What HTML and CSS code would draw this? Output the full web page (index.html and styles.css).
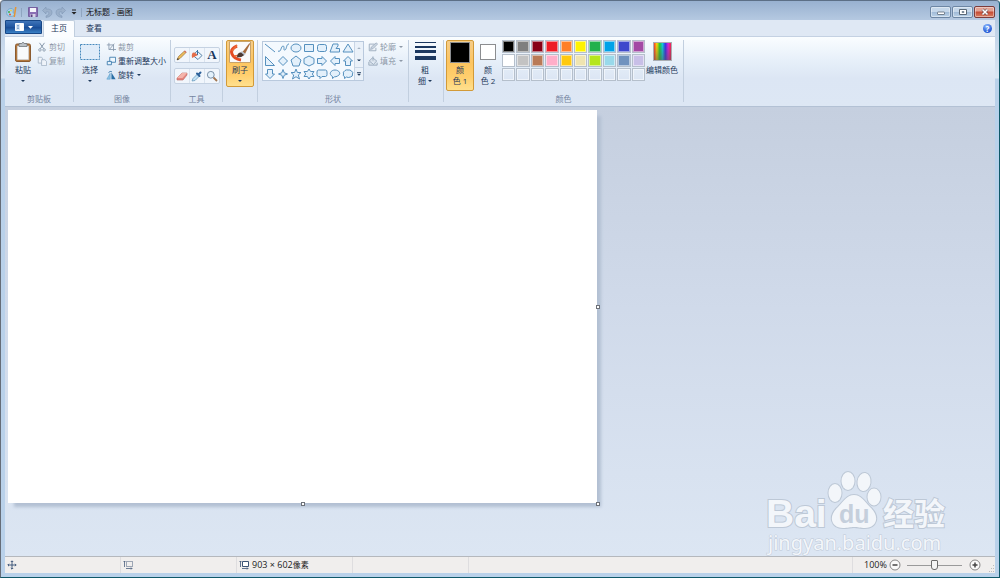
FILE: index.html
```html
<!DOCTYPE html>
<html lang="zh-CN">
<head>
<meta charset="utf-8">
<title>无标题 - 画图</title>
<link rel="stylesheet" href="styles.css">
</head>
<body>
<div class="window">
  <header class="titlebar">
    <svg class="app-icon" viewBox="0 0 12 12"><path d="M5 2.500C1 3 .3 6 1 8.500c1 2.500 6 2.500 7.500.500.500-2-2-1.500-1.500-3C7.500 4 7.500 2.500 5 2.500z" fill="#a9d4ed" stroke="#619cc4" stroke-width=".7"/><circle cx="3" cy="6" r="1" fill="#47a84b"/><circle cx="4" cy="8.500" r="1" fill="#df5340"/><circle cx="5" cy="4.500" r=".9" fill="#eec63e"/><path d="M10.500 1 9 11H7.500L9 1z" fill="#e59432"/></svg>
    <span class="bar-sep"></span>
    <button class="quick" aria-label="保存"><svg viewBox="0 0 12 12"><path d="M1.500 1.500h9v9h-9z" fill="#8b6fb5" stroke="#75609f"/><path d="M3 2h6v4H3z" fill="#f4f4fb"/><path d="M3.500 8h5v3h-5z" fill="#d8d2e8"/><path d="M4 8.500h1.500V11H4z" fill="#59427f"/></svg></button>
    <button class="quick" aria-label="撤消"><svg viewBox="0 0 12 12"><path d="M5 1 1.500 4.500 5 8V6q3-1 3 1 0 2-3 3v1.500q6-1 6-5T5 3z" fill="#9bb0ca" stroke="#7f97b5" stroke-width=".6"/></svg></button>
    <button class="quick" aria-label="重做"><svg viewBox="0 0 12 12"><path d="m7 1 3.500 3.500L7 8V6Q4 5 4 7q0 2 3 3v1.500q-6-1-6-5T7 3z" fill="#9bb0ca" stroke="#7f97b5" stroke-width=".6"/></svg></button>
    <button class="customize" aria-label="自定义快速访问工具栏"><svg viewBox="0 0 6 6"><path d="M1 1h4" stroke="#222"/><path d="M.5 3h5L3 5.500z" fill="#222"/></svg></button>
    <span class="bar-sep"></span>
    <h1 class="title">无标题 - 画图</h1>
    <div class="window-controls">
      <button aria-label="最小化"><svg viewBox="0 0 10 8"><rect x="1.500" y="4" width="7" height="2.500" rx=".5" fill="#fff" stroke="#5b6876" stroke-width=".8"/></svg></button>
      <button aria-label="最大化"><svg viewBox="0 0 10 8"><path d="M1.500 1.500h7v5h-7z" fill="#fff" stroke="#5b6876"/><path d="M4 3.500h2v1H4z" fill="#8fa6c0" stroke="#5b6876" stroke-width=".6"/></svg></button>
      <button class="close" aria-label="关闭"><svg viewBox="0 0 10 8"><path d="m2.500 1.500 5 5m0-5-5 5" stroke="#6b4b4e" stroke-width="2.800"/><path d="m2.500 1.500 5 5m0-5-5 5" stroke="#fff" stroke-width="1.600"/></svg></button>
    </div>
  </header>

  <nav class="tabs">
    <button class="file-menu" aria-label="画图菜单"><svg viewBox="0 0 18 8"><path d="M.5.5h8v7h-8z" fill="#d5e5f6" stroke="#f7fbff"/><path d="M2 2.500h2M2 4h2M2 5.500h2" stroke="#5d89bd" stroke-width=".7"/><path d="M5 1h3v6H5z" fill="#fff"/><path d="M13 3h5l-2.500 2.700z" fill="#fff"/></svg></button>
    <button class="tab tab-active">主页</button>
    <button class="tab">查看</button>
    <button class="help" aria-label="帮助">?</button>
  </nav>

  <section class="ribbon">
    <div class="group group-clipboard">
      <div class="group-body">
        <button class="big"><svg class="big-icon" viewBox="0 0 20 22"><rect x="2.500" y="3" width="15" height="17.500" rx="1.500" fill="#b2783f" stroke="#8b5b30"/><path d="M4.500 5h11v13.500h-11z" fill="#f8fafc" stroke="#d2d7dd" stroke-width=".7"/><path d="M6 2.500h2.500Q10 0 11.500 2.500H14v3H6z" fill="#b9c0c6" stroke="#646c73" stroke-width=".7"/></svg><span>粘贴</span><i class="caret"></i></button>
        <div class="stack">
          <button class="small" disabled><svg viewBox="0 0 12 12"><path d="m3 1 5 7M9 1 4 8" stroke="#8798ab" stroke-width="1.200"/><g fill="none" stroke="#8798ab"><circle cx="3.500" cy="9.500" r="1.500"/><circle cx="8.500" cy="9.500" r="1.500"/></g></svg>剪切</button>
          <button class="small" disabled><svg viewBox="0 0 12 12"><g fill="#eef3f9" stroke="#a4b3c5"><path d="M1.500 1.500h4l1 1v6h-5z"/><path d="M5.500 4.500h4l2 2v5h-6z"/></g></svg>复制</button>
        </div>
      </div>
      <h2>剪贴板</h2>
    </div>

    <div class="group group-image">
      <div class="group-body">
        <button class="big"><svg class="big-icon" viewBox="0 0 20 22"><path d="M.5 3.500h19v15H.5z" fill="#e0ecf9" stroke="#4689bc" stroke-dasharray="2 1"/></svg><span>选择</span><i class="caret"></i></button>
        <div class="stack">
          <button class="small" disabled><svg viewBox="0 0 12 12"><path d="M3.500 1v8H12M1 3.500h8V11M4 9l6-7" fill="none" stroke="#8798ab"/></svg>裁剪</button>
          <button class="small"><svg viewBox="0 0 12 12"><path d="M4.500 1.500h7v6h-7z" fill="#eef7fe" stroke="#3576a8"/><path d="M1.500 6.500h5v4h-5z" fill="#e4f2fd" stroke="#3576a8"/></svg>重新调整大小</button>
          <button class="small"><svg viewBox="0 0 12 12"><path d="M5 4v7H1z" fill="#91c4e5" stroke="#4f97c6" stroke-width=".6"/><path d="M6.500 3v8h5z" fill="#286da4"/><path d="M3 3q2-2 4-1" fill="none" stroke="#286da4"/></svg>旋转<i class="caret"></i></button>
        </div>
      </div>
      <h2>图像</h2>
    </div>

    <div class="group group-tools">
      <div class="group-body">
        <div class="tool-row">
          <button aria-label="铅笔"><svg viewBox="0 0 12 12"><path d="m1 11 1.500-3.500L8.500 2 10 3.500l-6 6z" fill="#edbd5b" stroke="#9a743b" stroke-width=".7"/><path d="m1 11 .7-2 1.400 1.300z" fill="#333"/><path d="m8.500 2 1.500 1.500" stroke="#d47063" stroke-width="1.500"/></svg></button>
          <button aria-label="用颜色填充"><svg viewBox="0 0 12 12"><path d="m6 2 5 4.500-4 4-5-4z" fill="#eef6ff" stroke="#5884a7"/><path d="M1 9Q0 3 3.500 3.500L7 6z" fill="#e46f4c"/><path d="M6.500 1v5" stroke="#3c75a4"/></svg></button>
          <button class="text-tool" aria-label="文本">A</button>
        </div>
        <div class="tool-row">
          <button aria-label="橡皮擦"><svg viewBox="0 0 12 12"><path d="m1 8 5-5h5v2L7 10H1z" fill="#e5857e" stroke="#ba6861" stroke-width=".6"/><path d="m1 8 5-5h5L6.500 8z" fill="#f4b5ac"/></svg></button>
          <button aria-label="颜色选取器"><svg viewBox="0 0 12 12"><path d="m1 11 1-2.500L6.500 4l2 2L4 10.500z" fill="#c4e3f6" stroke="#5f93b8" stroke-width=".7"/><path d="m6 3.500 2.500 2.500M7.500 4.500l2-2" stroke="#2f629a" stroke-width="2" stroke-linecap="round"/></svg></button>
          <button aria-label="放大镜"><svg viewBox="0 0 12 12"><circle cx="4.800" cy="4.800" r="3.400" fill="#e3f1fb" stroke="#788fa7"/><path d="m7.500 7.500 3.500 3.500" stroke="#a17550" stroke-width="1.800"/></svg></button>
        </div>
      </div>
      <h2>工具</h2>
    </div>

    <div class="group group-brush">
      <button class="big selected"><svg class="big-icon" viewBox="0 0 22 22"><path d="M.5.5h21v21H.5z" fill="#fafafa" stroke="#c7a36c"/><path d="M8 5Q1 8 3 13q2 5 9 6" fill="none" stroke="#e44b24" stroke-width="3"/><path d="m3 10 5-6M5 15l8-1" stroke="#ed6a35" stroke-width="1.500"/><path d="m20.500 2-7 9 2.500 2 5-10z" fill="#a76b3c"/><path d="m13 10 3.500 3-2 2-3.500-3z" fill="#bbc4cf"/><path d="M12 11.500q-4 0-4 5 5 0 7-2.500z" fill="#4d3932"/></svg><span>刷子</span><i class="caret"></i></button>
    </div>

    <div class="group group-shapes">
      <div class="group-body">
        <div class="gallery">
          <div class="shape-grid">
            <button aria-label="直线"><svg viewBox="0 0 12 12"><path d="m1 2 10 8"/></svg></button>
            <button aria-label="曲线"><svg viewBox="0 0 12 12"><path d="M1 9c3 2 3-5 5-5s0 5 2 4 1-6 4-6" fill="none"/></svg></button>
            <button aria-label="椭圆形"><svg viewBox="0 0 12 12"><ellipse cx="6" cy="6" rx="5" ry="4"/></svg></button>
            <button aria-label="矩形"><svg viewBox="0 0 12 12"><path d="M1.500 2.500h9v7h-9z"/></svg></button>
            <button aria-label="圆角矩形"><svg viewBox="0 0 12 12"><rect x="1.500" y="2.500" width="9" height="7" rx="2"/></svg></button>
            <button aria-label="多边形"><svg viewBox="0 0 12 12"><path d="m1 10 3-8h5v2L7 6.500h3.500V10H1z"/></svg></button>
            <button aria-label="三角形"><svg viewBox="0 0 12 12"><path d="m6 2 5 8H1z"/></svg></button>
            <button aria-label="直角三角形"><svg viewBox="0 0 12 12"><path d="m1.500 1.500 9 9h-9z"/></svg></button>
            <button aria-label="菱形"><svg viewBox="0 0 12 12"><path d="m6 1.500 4.500 4.500L6 10.500 1.500 6z"/></svg></button>
            <button aria-label="五边形"><svg viewBox="0 0 12 12"><path d="m6 1 5 4-2 6H3L1 5z"/></svg></button>
            <button aria-label="六边形"><svg viewBox="0 0 12 12"><path d="m6 1 5 2.500v5L6 11 1 8.500v-5z"/></svg></button>
            <button aria-label="右箭头"><svg viewBox="0 0 12 12"><path d="M1.500 3.500H6v-2L10.500 6 6 10.500v-2H1.500z"/></svg></button>
            <button aria-label="左箭头"><svg viewBox="0 0 12 12"><path d="M10.500 3.500H6v-2L1.500 6 6 10.500v-2h4.500z"/></svg></button>
            <button aria-label="上箭头"><svg viewBox="0 0 12 12"><path d="M3.500 10.500V6h-2L6 1.500 10.500 6h-2v4.500z"/></svg></button>
            <button aria-label="下箭头"><svg viewBox="0 0 12 12"><path d="M3.500 1.500V6h-2L6 10.500 10.500 6h-2V1.500z"/></svg></button>
            <button aria-label="四角星"><svg viewBox="0 0 12 12"><path d="m6 1.500 1.200 3.300L10.500 6 7.200 7.200 6 10.500 4.800 7.200 1.500 6l3.300-1.200z"/></svg></button>
            <button aria-label="五角星"><svg viewBox="0 0 12 12"><path d="m6 1 1.400 3.500H11L8.300 7 9.500 11 6 8.700 2.500 11l1.200-4L1 4.500h3.600z"/></svg></button>
            <button aria-label="六角星"><svg viewBox="0 0 12 12"><path d="m6 1 1.600 2.500H11L9.300 6 11 8.500H7.600L6 11 4.400 8.500H1L2.700 6 1 3.500h3.400z"/></svg></button>
            <button aria-label="圆角矩形标注"><svg viewBox="0 0 12 12"><path d="M2.500 2h7Q11 2 11 4v2.500q0 2-1.500 2H6L4 10.500v-2H2.500q-1.500 0-1.500-2V4q0-2 1.500-2z"/></svg></button>
            <button aria-label="椭圆形标注"><svg viewBox="0 0 12 12"><path d="M3.500 8.500C-1 6 2 2 6 2s7 4 2.500 6Q7 9 5.500 8.800L3.500 10.500z"/></svg></button>
            <button aria-label="云形标注"><svg viewBox="0 0 12 12"><path d="M3 2.500q1.500-1 3-.5 2-.5 3.500 1Q11.500 4.500 10.500 6q.5 2.500-2 3Q6 10 4.500 9l-2 1.500v-2Q.5 8 1.500 6 .5 4 3 2.500z"/></svg></button>
          </div>
          <div class="scroller">
            <button class="dim" aria-label="向上滚动"><i class="caret up"></i></button>
            <button aria-label="向下滚动"><i class="caret"></i></button>
            <button class="more" aria-label="更多形状"><i class="caret"></i></button>
          </div>
        </div>
        <div class="stack">
          <button class="small" disabled><svg viewBox="0 0 12 12"><path d="M8 2.500H1.500v8h8V7" fill="#edf2f8" stroke="#94a5b8"/><path d="m3 9 1-3 6-5 1.500 1.500L6 8z" fill="#cbd5e1" stroke="#94a5b8" stroke-width=".8"/></svg>轮廓<i class="caret"></i></button>
          <button class="small" disabled><svg viewBox="0 0 12 12"><path d="m5.500 2 5 4-4 4-5-4zM1 7v4h10V8" fill="#d9e2ec" stroke="#94a5b8"/><path d="M6 .5v5" stroke="#94a5b8"/></svg>填充<i class="caret"></i></button>
        </div>
      </div>
      <h2>形状</h2>
    </div>

    <div class="group group-size">
      <button class="big two-line"><svg class="size-icon" viewBox="0 0 21 20"><path d="M0 1h21v1H0zm0 4h21v2H0zm0 4h21v3H0zm0 6h21v4H0z" fill="#1c3860"/></svg><span>粗<br>细<i class="caret"></i></span></button>
    </div>

    <div class="group group-colors">
      <div class="group-body">
        <button class="big two-line selected"><i class="swatch foreground"></i><span>颜<br>色 1</span></button>
        <button class="big two-line"><i class="swatch background"></i><span>颜<br>色 2</span></button>
        <div class="palette">
          <button class="c-black" aria-label="黑色"></button><button class="c-gray" aria-label="灰色"></button><button class="c-maroon" aria-label="深红色"></button><button class="c-red" aria-label="红色"></button><button class="c-orange" aria-label="橙色"></button><button class="c-yellow" aria-label="黄色"></button><button class="c-green" aria-label="绿色"></button><button class="c-cyan" aria-label="青绿"></button><button class="c-indigo" aria-label="靛青"></button><button class="c-purple" aria-label="紫色"></button>
          <button class="c-white" aria-label="白色"></button><button class="c-silver" aria-label="浅灰"></button><button class="c-brown" aria-label="褐色"></button><button class="c-pink" aria-label="玫瑰色"></button><button class="c-gold" aria-label="金色"></button><button class="c-cream" aria-label="浅黄"></button><button class="c-lime" aria-label="酸橙色"></button><button class="c-sky" aria-label="淡青绿"></button><button class="c-steel" aria-label="蓝灰"></button><button class="c-lavender" aria-label="淡紫"></button>
          <button aria-label="自定义 1"></button><button aria-label="自定义 2"></button><button aria-label="自定义 3"></button><button aria-label="自定义 4"></button><button aria-label="自定义 5"></button><button aria-label="自定义 6"></button><button aria-label="自定义 7"></button><button aria-label="自定义 8"></button><button aria-label="自定义 9"></button><button aria-label="自定义 10"></button>
        </div>
        <button class="big edit-colors"><i class="spectrum"></i><span>编辑颜色</span></button>
      </div>
      <h2>颜色</h2>
    </div>
  </section>

  <main class="workspace">
    <div class="paper">
      <i class="handle handle-right"></i><i class="handle handle-bottom"></i><i class="handle handle-corner"></i>
    </div>
    <svg class="watermark" viewBox="0 0 190 92" role="img" aria-label="Baidu 经验">
      <g class="mark">
        <ellipse cx="73" cy="29" rx="6.500" ry="9"/>
        <ellipse cx="86" cy="17" rx="6.500" ry="9"/>
        <ellipse cx="102" cy="18" rx="6.500" ry="9" transform="rotate(8 102 18)"/>
        <ellipse cx="112" cy="33" rx="6.500" ry="8.500"/>
        <path d="M92 31c7 0 10 6 16 12 11 10 6 21-5 21-5 0-7-1-11-1s-6 1-11 1c-11 0-16-11-5-21 6-6 9-12 16-12z"/>
        <text class="bai" x="4" y="63">Bai</text>
        <text class="jingyan" x="121" y="61">经验</text>
        <text class="url" x="6" y="86">jingyan.baidu.com</text>
      </g>
      <text class="du" x="77" y="59">du</text>
    </svg>
  </main>

  <footer class="status">
    <div class="cell"><svg viewBox="0 0 10 10"><path d="M5 1v8M1 5h8M3.800 2 5 .8 6.200 2M3.800 8 5 9.200 6.200 8M2 3.800.8 5 2 6.200M8 3.800 9.200 5 8 6.200" fill="none" stroke="#324c72" stroke-width=".9"/></svg></div>
    <div class="cell"><svg viewBox="0 0 10 10"><path d="M3.500 1.500h6v5h-6z" fill="none" stroke="#4a5e7d" stroke-dasharray="1 1"/><path d="M1.500 1v6M.5 2l1-1 1 1M3 8.500h6M8 7.500l1 1-1 1" fill="none" stroke="#4a5e7d" stroke-width=".8"/></svg></div>
    <div class="cell"><svg viewBox="0 0 10 10"><path d="M3.500 1.500h6v5h-6z" fill="#fff" stroke="#3c5375"/><path d="M1.500 1v6M.5 2l1-1 1 1M3 8.500h6M8 7.500l1 1-1 1" fill="none" stroke="#3c5375" stroke-width=".8"/></svg><span>903 × 602<small>像素</small></span></div>
    <div class="cell"></div>
    <div class="cell cell-fill"></div>
    <div class="zoom">
      <label for="zoom">100%</label>
      <button aria-label="缩小"><svg viewBox="0 0 12 12"><circle cx="6" cy="6" r="5" fill="#fafafa" stroke="#888"/><path d="M3.500 6h5" stroke="#444" stroke-width="1.500"/></svg></button>
      <input id="zoom" type="range" min="0" max="100" value="50">
      <button aria-label="放大"><svg viewBox="0 0 12 12"><circle cx="6" cy="6" r="5" fill="#fafafa" stroke="#888"/><path d="M3.500 6h5M6 3.500v5" stroke="#444" stroke-width="1.500"/></svg></button>
      <svg class="grip" viewBox="0 0 8 8"><path d="M6 0h1v1H6zM4 3h1v1H4zm2 0h1v1H6zM2 6h1v1H2zm2 0h1v1H4zm2 0h1v1H6z" fill="#bbb"/></svg>
    </div>
  </footer>
</div>
</body>
</html>
```

FILE: styles.css
```css
* { box-sizing: border-box; }

body {
  margin: 0;
  font: 8px/12px "Open Sans", "Noto Sans CJK SC", sans-serif;
  color: #1e395b;
}

button {
  margin: 0;
  padding: 0;
  border: 0;
  background: none;
  font: inherit;
  color: inherit;
}

svg { display: block; flex: none; }
h1, h2 { margin: 0; font: inherit; }

.window {
  display: flex;
  flex-direction: column;
  min-height: 100vh;
  padding: 0 4px 4px;
  border: 1px solid #0f5869;
  border-top-color: #5c6f86;
  border-left-color: #666d78;
  border-radius: 4px 4px 0 0;
  background: linear-gradient(#98b1d0, #b6cae2 20px, #c0d3e8 30px, #dbe7f4 77px, #b9d1ea 78px);
}

/* Title bar */
.titlebar {
  display: flex;
  align-items: center;
  height: 19px;
  padding: 3px 0 0 1px;
}
.app-icon { width: 12px; height: 12px; }
.bar-sep { width: 1px; height: 9px; margin: 0 4px 0 3px; background: #8fa5c0; }
.quick { width: 14px; padding: 0 1px; }
.quick svg { width: 12px; height: 12px; }
.customize { width: 8px; margin-left: 2px; padding: 0 1px; }
.customize svg { width: 6px; height: 6px; }
.title { color: #111; }
.window-controls { display: flex; gap: 1px; margin-left: auto; }
.window-controls button {
  display: grid;
  place-items: center;
  width: 21px;
  height: 12px;
  border: 1px solid #6d86a4;
  border-radius: 2px;
  background: linear-gradient(#c5d7ea 45%, #9fb9d6 50%, #bcd3e9);
  box-shadow: inset 0 0 0 1px #ffffff66;
}
.window-controls svg { width: 10px; height: 8px; }
.window-controls .close {
  border-color: #7c3c3c;
  background: linear-gradient(#e2a294 40%, #c54b35 50%, #d98064);
}

/* Tabs */
.tabs {
  display: flex;
  height: 17px;
  background: #dfe8f4;
  border-bottom: 1px solid #c4d1e2;
}
.file-menu {
  display: grid;
  place-items: center;
  width: 37px;
  height: 14px;
  border: 1px solid #174786;
  border-radius: 0 2px 0 0;
  background: linear-gradient(#3e74b8, #1e55a0 50%, #1a4d95 55%, #3a81c6);
}
.file-menu svg { width: 18px; height: 8px; }
.tab { width: 38px; height: 15px; }
.tab-active {
  width: 32px;
  height: 17px;
  margin-left: 1px;
  padding-bottom: 2px;
  border: 1px solid #c0cede;
  border-bottom: 0;
  border-radius: 2px 2px 0 0;
  background: #fbfdff;
}
.help {
  width: 9px;
  height: 9px;
  margin: 4px 3px 0 auto;
  border-radius: 50%;
  background: radial-gradient(circle at 40% 25%, #8bb8ff, #2359d5 70%);
  color: #fff;
  font-weight: bold;
  line-height: 9px;
}

/* Ribbon */
.ribbon {
  display: flex;
  height: 70px;
  background: linear-gradient(#fafdff, #e6eff9 35%, #dce6f4 60%, #dde7f4);
  border-bottom: 1px solid #b3c1d4;
}
.group {
  display: flex;
  flex-direction: column;
  margin: 3px 0 4px;
  border-right: 1px solid #c2cfdf;
}
.group h2 {
  margin-top: auto;
  line-height: 6px;
  text-align: center;
  color: #7585a0;
}
.group-body { display: flex; }
.group-clipboard { width: 69px; }
.group-image { width: 97px; }
.group-tools { width: 52px; }
.group-brush { width: 35px; }
.group-shapes { width: 151px; }
.group-size { width: 35px; }
.group-colors { width: 240px; }

.big {
  display: flex;
  flex-direction: column;
  align-items: center;
  width: 28px;
  height: 47px;
  padding-top: 1px;
  margin-left: 3px;
  border-radius: 2px;
}
.big-icon { width: 20px; height: 22px; margin-bottom: 1px; }
.group-clipboard .big { margin-left: 4px; }
.group-image .big { margin-left: 2px; }
.selected {
  border: 1px solid #d29a38;
  background: linear-gradient(#f6cd89, #fdc560 45%, #ffcf6e 75%, #ffe08e);
  padding-top: 0;
}
.selected .big-icon { width: 22px; }
.two-line { height: 51px; line-height: 11px; }

.caret {
  display: inline-block;
  width: 4px;
  height: 2px;
  margin: 0 3px;
  background: currentColor;
  clip-path: polygon(0 0, 100% 0, 50% 100%);
}
.big > .caret { margin-top: 4px; }
.two-line .caret { margin: 0 0 2px 2px; }
.up { clip-path: polygon(0 100%, 100% 100%, 50% 0); }

.stack { display: flex; flex-direction: column; gap: 2px; padding-top: 1px; }
.group-image .stack { margin-left: 2px; }
.small { display: flex; align-items: center; gap: 2px; white-space: nowrap; }
.small svg { width: 10px; height: 10px; }
.small:disabled { color: #8e99a8; }
.small .caret { margin: 0 1px; }

.group-tools .group-body { flex-direction: column; padding: 7px 0 0 3px; gap: 5px; }
.tool-row {
  display: flex;
  width: 46px;
  height: 16px;
  border: 1px solid #c5d2e2;
  border-radius: 2px;
  background: #f1f6fc;
}
.tool-row button { display: grid; place-items: center; flex: 1; }
.tool-row button + button { border-left: 1px solid #dae4ef; }
.tool-row svg { width: 12px; height: 12px; }
.tool-row .text-tool { font: bold 13px/14px "Liberation Serif", serif; color: #19365d; }

.group-shapes .group-body { padding: 1px 0 0 4px; gap: 4px; }
.group-shapes .stack { padding: 0; }
.gallery {
  display: flex;
  height: 40px;
  border: 1px solid #b9c9dd;
  background: #f4f9fe;
}
.shape-grid { display: grid; grid-template-columns: repeat(7, 13px); }
.shape-grid button { display: grid; place-items: center; }
.shape-grid svg { width: 12px; height: 12px; fill: #e3f0fb; stroke: #5590be; stroke-width: 1; }
.scroller {
  display: flex;
  flex-direction: column;
  width: 9px;
  border-left: 1px solid #c9d6e6;
  background: #eaf1f9;
}
.scroller button { display: grid; place-items: center; flex: 1; }
.scroller .caret { margin: 0; }
.scroller .dim { color: #a3b0c1; }
.scroller .more { border-top: 1px solid #c9d6e6; }
.more .caret { height: 4px; clip-path: polygon(0 0, 100% 0, 100% 25%, 0 25%, 0 50%, 100% 50%, 50% 100%, 0 50%); }

.size-icon { width: 21px; height: 20px; margin-bottom: 3px; }
.group-size .big { margin-left: 2px; }

.swatch { flex: none; border: 1px solid #8b8d90; box-shadow: inset 0 0 0 1px #fff; }
.foreground { width: 20px; height: 21px; margin: 1px 0; background: #000; box-shadow: none; }
.background { width: 16px; height: 16px; margin: 3px 0 4px; background: #fff; }
.group-colors .two-line { margin-left: 2px; }
.group-colors .two-line + .two-line { width: 24px; }
.palette {
  display: grid;
  grid-template-columns: repeat(10, 1fr);
  grid-template-rows: repeat(3, 13px);
  gap: 1px;
  width: 143px;
  margin-left: 2px;
}
.palette button { border: 1px solid #b5bfcb; box-shadow: inset 0 0 0 1px #ffffff80; }
.edit-colors { width: 34px; margin-left: 0; white-space: nowrap; }
.spectrum {
  flex: none;
  width: 19px;
  height: 19px;
  margin: 1px 0 3px;
  border: 1px solid #a9adb2;
  background: linear-gradient(#0000, #5558), linear-gradient(90deg, #f33, #fd0, #2c3, #1cd, #33e, #d2d, #f24);
}
.c-black { background: #000; }
.c-gray { background: #7f7f7f; }
.c-maroon { background: #880015; }
.c-red { background: #ed1c24; }
.c-orange { background: #ff7f27; }
.c-yellow { background: #fff200; }
.c-green { background: #22b14c; }
.c-cyan { background: #00a2e8; }
.c-indigo { background: #3f48cc; }
.c-purple { background: #a349a4; }
.c-white { background: #fff; }
.c-silver { background: #c3c3c3; }
.c-brown { background: #b97a57; }
.c-pink { background: #ffaec9; }
.c-gold { background: #ffc90e; }
.c-cream { background: #efe4b0; }
.c-lime { background: #b5e61d; }
.c-sky { background: #99d9ea; }
.c-steel { background: #7092be; }
.c-lavender { background: #c8bfe7; }

/* Drawing area */
.workspace {
  position: relative;
  flex: 1;
  padding: 3px;
  background: linear-gradient(#c5cfdf, #d0daea 45%, #dce6f3);
}
.paper {
  position: relative;
  width: 589px;
  height: 393px;
  background: #fff;
  box-shadow: 5px 5px 3px -1px #b3c0d3;
}
.handle {
  position: absolute;
  width: 4px;
  height: 4px;
  border: 1px solid #6d7178;
  background: #fff;
}
.handle-right { top: calc(50% - 2px); right: -3px; }
.handle-bottom { bottom: -3px; left: calc(50% - 2px); }
.handle-corner { right: -3px; bottom: -3px; }
.watermark { position: absolute; right: 43px; bottom: 0; width: 190px; height: 92px; }
.mark { fill: #f3f6fa; stroke: #bdc8d6; stroke-width: 2px; paint-order: stroke; }
.bai { font: bold 39px "Liberation Sans", sans-serif; }
.jingyan { font: bold 31px "Noto Sans CJK SC", sans-serif; }
.url { font: 20px "Noto Sans", sans-serif; stroke-width: 1px; }
.du { font: bold 25px "Liberation Sans", sans-serif; fill: #c5cfdc; }

/* Status bar */
.status {
  display: flex;
  height: 17px;
  border-top: 1px solid #b5b8bd;
  background: #f0eeed;
  color: #222;
  font-size: 9px;
}
.cell {
  display: flex;
  align-items: center;
  gap: 3px;
  width: 116px;
  padding-left: 2px;
  border-right: 1px solid #dedddf;
}
.cell svg { width: 10px; height: 10px; }
.cell small { font-size: 8px; }
.cell-fill { flex: 1; }
.zoom { display: flex; align-items: center; width: 142px; padding-left: 11px; }
.zoom label { width: 25px; }
.zoom button svg { width: 12px; height: 12px; }
.zoom input {
  appearance: none;
  width: 55px;
  height: 12px;
  margin: 0 7px 0 6px;
  background: linear-gradient(#9a9a9a, #9a9a9a) center / 100% 1px no-repeat;
}
.zoom input::-webkit-slider-thumb {
  appearance: none;
  width: 7px;
  height: 10px;
  border: 1px solid #6c6c6c;
  border-radius: 1px 1px 3px 3px;
  background: #f4f4f4;
}
.grip { align-self: end; width: 8px; height: 8px; margin-left: auto; }
```
